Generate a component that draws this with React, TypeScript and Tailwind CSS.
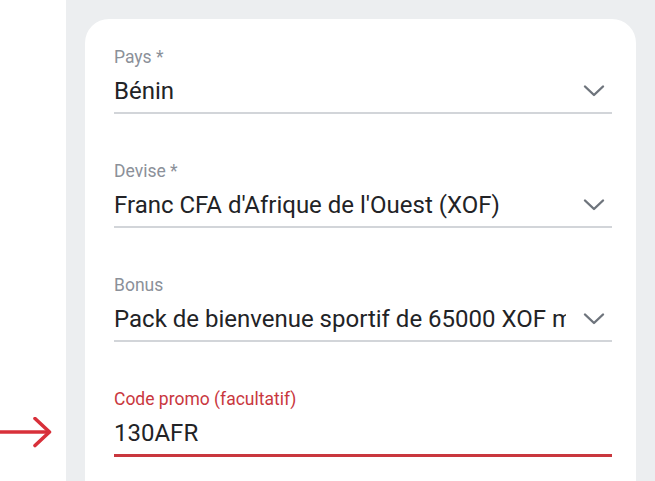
import React from 'react';

type FieldProps = {
  label: string;
  value: string;
  select?: boolean;
  active?: boolean;
};

function Chevron() {
  return (
    <svg width="22" height="14" viewBox="0 0 22 14" fill="none" className="shrink-0">
      <path d="M2 2.5 L11 11 L20 2.5" stroke="#6e747c" strokeWidth="2.4" strokeLinecap="round" strokeLinejoin="round" />
    </svg>
  );
}

function Field({ label, value, select, active }: FieldProps) {
  return (
    <div className="mb-[47px]">
      <div className={`text-[17.5px] leading-[20px] ${active ? 'text-[#c9373e]' : 'text-[#8b9099]'}`}>{label}</div>
      <div
        className={`mt-[10px] flex items-center gap-[17px] pb-[7px] ${
          active ? 'border-b-[3px] border-[#c9373e]' : 'border-b-[2px] border-[#d2d5d9]'
        }`}
      >
        <div className="min-w-0 flex-1 overflow-hidden whitespace-nowrap text-[24px] leading-[28px] text-[#222326]">{value}</div>
        {select && (
          <div className="mr-[7px] shrink-0">
            <Chevron />
          </div>
        )}
      </div>
    </div>
  );
}

export default function App() {
  return (
    <div className="flex h-[481px] w-[655px] overflow-hidden bg-white" style={{ fontFamily: 'Roboto, "Noto Sans", sans-serif' }}>
      <div className="w-[66px] shrink-0 pt-[417px]">
        <svg width="53" height="31" viewBox="0 0 53 31" fill="none">
          <path d="M0 15 H49" stroke="#d8303a" strokeWidth="3.6" />
          <path d="M35 1.5 L49.5 15 L35 28.5" stroke="#d8303a" strokeWidth="3.6" strokeLinecap="round" strokeLinejoin="round" />
        </svg>
      </div>
      <div className="min-w-0 flex-1 bg-[#eceef0] px-[19px] pt-[19px]">
        <div className="h-full rounded-t-[24px] bg-white pl-[29px] pr-[24px] pt-[28px]">
          <Field label="Pays *" value="Bénin" select />
          <Field label="Devise *" value="Franc CFA d'Afrique de l'Ouest (XOF)" select />
          <Field label="Bonus" value="Pack de bienvenue sportif de 65000 XOF max" select />
          <Field label="Code promo (facultatif)" value="130AFR" active />
        </div>
      </div>
    </div>
  );
}
